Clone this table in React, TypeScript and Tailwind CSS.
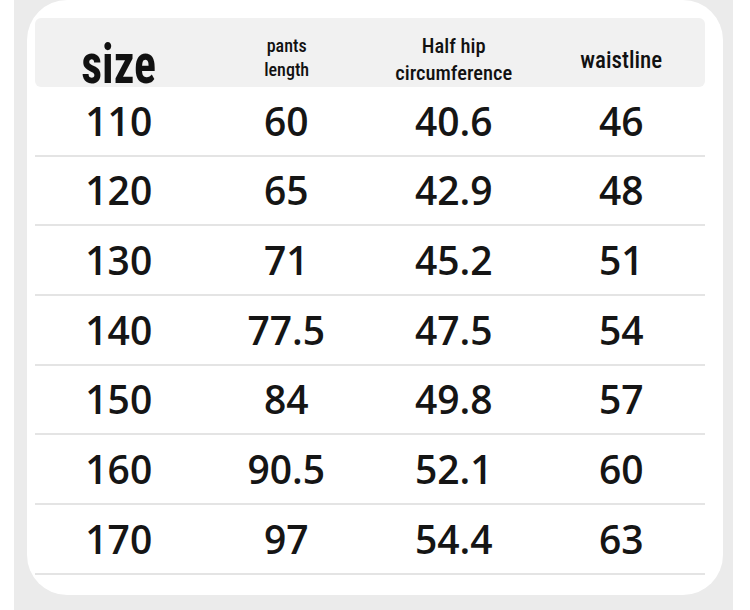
const rows = [
  ["110", "60", "40.6", "46"],
  ["120", "65", "42.9", "48"],
  ["130", "71", "45.2", "51"],
  ["140", "77.5", "47.5", "54"],
  ["150", "84", "49.8", "57"],
  ["160", "90.5", "52.1", "60"],
  ["170", "97", "54.4", "63"],
];

const headFont = "font-['Roboto_Condensed',Roboto,sans-serif]";

export default function App() {
  return (
    <div className="w-[750px] h-[610px] bg-white pl-[14px] pr-[17px]">
      <div className="h-full bg-[#ebebeb] pl-[13px] pr-[10px] pb-[15px]">
        <div className="h-full bg-white rounded-[40px] pl-[8px] pr-[18px] pt-[18px]">
          {/* header */}
          <div className={`grid grid-cols-4 h-[69px] bg-[#f1f1f1] rounded-[6px] text-[#111] ${headFont}`}>
            <div className="flex items-end justify-center">
              <span className="inline-block text-[56px] font-bold leading-none scale-x-[0.82] translate-y-[5px]">size</span>
            </div>
            <div className="flex items-center justify-center pt-[10px]">
              <span className="inline-block text-[19px] font-medium leading-[24px] text-center scale-x-[0.95]">
                pants
                <br />
                length
              </span>
            </div>
            <div className="flex items-center justify-center pt-[14px]">
              <span className="text-[20.5px] font-medium leading-[27px] text-center">
                Half hip
                <br />
                circumference
              </span>
            </div>
            <div className="flex items-center justify-center pt-[18px]">
              <span className="text-[23px] font-medium">waistline</span>
            </div>
          </div>

          {/* rows */}
          {rows.map((r, i) => (
            <div
              key={i}
              className="grid grid-cols-4 h-[69.7px] border-b-2 border-[#e4e4e4] font-['Open_Sans','Noto_Sans',sans-serif] text-[39px] font-semibold text-[#151515]"
            >
              {r.map((c, j) => (
                <div key={j} className="flex items-center justify-center">
                  {c}
                </div>
              ))}
            </div>
          ))}
        </div>
      </div>
    </div>
  );
}
